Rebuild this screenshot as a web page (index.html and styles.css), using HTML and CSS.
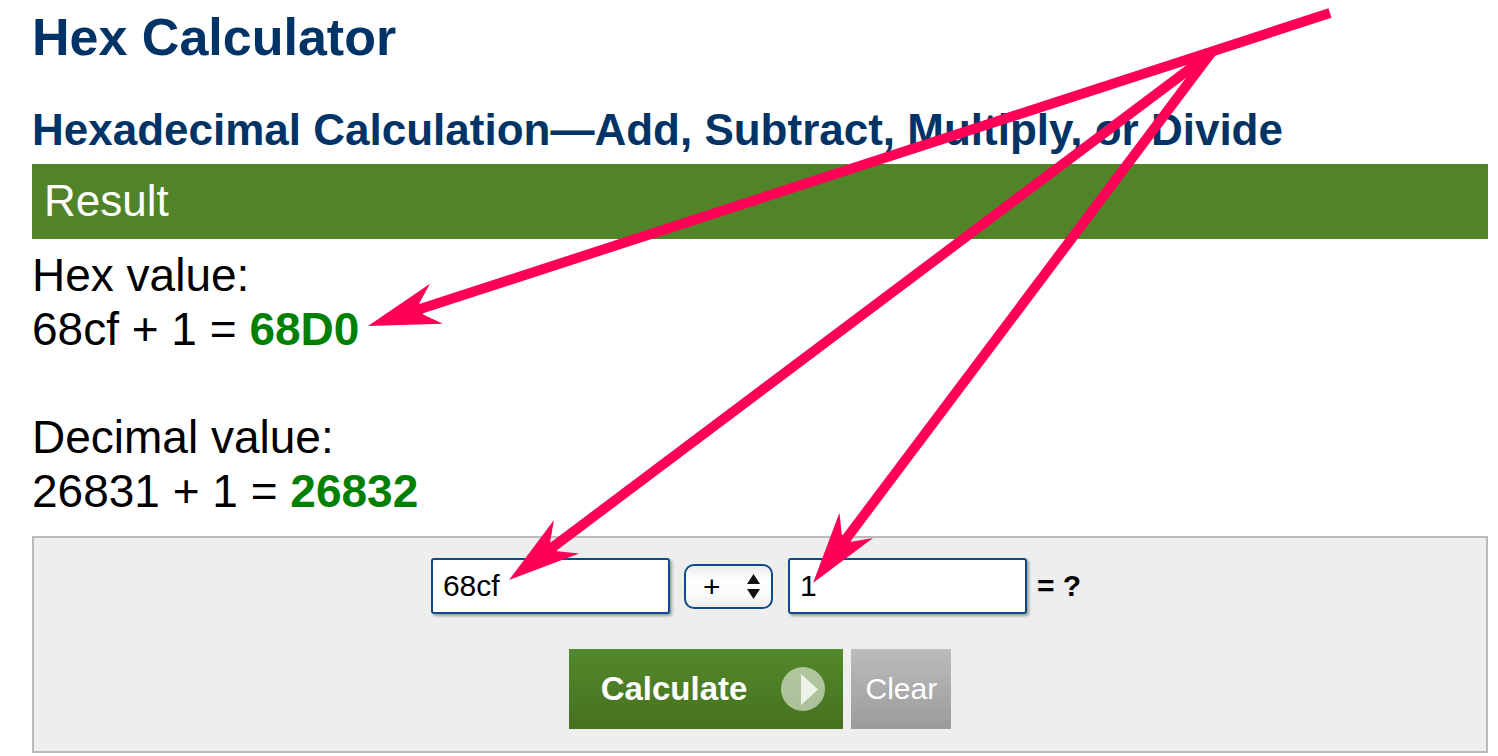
FILE: index.html
```html
<!DOCTYPE html>
<html lang="en">
<head>
    <meta charset="UTF-8">
    <meta name="viewport" content="width=device-width, initial-scale=1.0">
    <title>Hex Calculator</title>
    <link rel="stylesheet" href="styles.css">
</head>
<body>
    <div class="page">
        <h1>Hex Calculator</h1>
        <h2>Hexadecimal Calculation—Add, Subtract, Multiply, or Divide</h2>

        <div class="result-bar">Result</div>
        <div class="result-text">
            Hex value:<br>
            68cf + 1 = <b class="answer">68D0</b><br>
            <br>
            Decimal value:<br>
            26831 + 1 = <b class="answer">26832</b>
        </div>

        <div class="calc-box">
            <form class="calc-row">
                <input type="text" class="num-input" value="68cf">
                <div class="op-select">
                    <span class="op-value">+</span>
                    <svg class="op-arrows" width="13" height="25" viewBox="0 0 13 25">
                        <polygon points="6.5,0 13,10 0,10" fill="#111"/>
                        <polygon points="0,15 13,15 6.5,25" fill="#111"/>
                    </svg>
                </div>
                <input type="text" class="num-input" value="1">
                <span class="equals">= ?</span>
            </form>
            <div class="button-row">
                <button type="button" class="btn-calc">
                    Calculate
                    <span class="go-icon">
                        <svg width="44" height="44" viewBox="0 0 44 44">
                            <polygon points="20,7 37,22.5 20,38" fill="#eef3ea"/>
                        </svg>
                    </span>
                </button>
                <button type="button" class="btn-clear">Clear</button>
            </div>
        </div>
    </div>

    <!-- annotation arrows drawn on top of the page -->
    <svg class="arrows" width="1498" height="756" viewBox="0 0 1498 756">
        <g fill="#ff0057" stroke="#ff0057">
            <g transform="translate(368 326) rotate(-18.02)">
                <line x1="50" y1="0" x2="1011.6" y2="0" stroke-width="10"/>
                <polygon points="0,0 72,-21 56,-6 56,6 72,21" stroke="none"/>
            </g>
            <g transform="translate(509 580) rotate(-36.9)">
                <line x1="50" y1="0" x2="879" y2="0" stroke-width="10"/>
                <polygon points="0,0 72,-21 56,-6 56,6 72,21" stroke="none"/>
            </g>
            <g transform="translate(813 583) rotate(-53.1)">
                <line x1="50" y1="0" x2="664" y2="0" stroke-width="10"/>
                <polygon points="0,0 72,-21 56,-6 56,6 72,21" stroke="none"/>
            </g>
        </g>
    </svg>
</body>
</html>
```

FILE: styles.css
```css
* {
    margin: 0;
    padding: 0;
    box-sizing: border-box;
}

body {
    font-family: 'Liberation Sans', Arial, Helvetica, sans-serif;
    background: #fff;
    color: #000;
    position: relative;
    width: 1498px;
    height: 756px;
    overflow: hidden;
}

.page {
    width: 1456px;
    margin-left: 32px;
}

h1 {
    color: #003366;
    font-size: 52px;
    font-weight: 700;
    line-height: 58px;
    padding-top: 8px;
}

h2 {
    color: #003366;
    font-size: 44px;
    font-weight: 700;
    line-height: 50px;
    margin: 39px 0 9px;
}

.result-bar {
    background: #518428;
    color: #fff;
    font-size: 44px;
    line-height: 51px;
    padding: 11px 12px 13px;
}

.result-text {
    font-size: 46px;
    line-height: 54px;
    margin: 9px 0 18px;
}

.answer {
    color: #008000;
}

.calc-box {
    background: #eeeeee;
    border: 2px solid #bbbbbb;
    padding: 20px 0 22px;
    display: flex;
    flex-direction: column;
    align-items: center;
    gap: 35px;
}

.calc-row {
    display: flex;
    align-items: center;
    padding-right: 8px;
}

.num-input {
    width: 239px;
    height: 56px;
    border: 2px solid #0f4a8a;
    border-radius: 3px;
    box-shadow: 2px 2px 3px rgba(0, 0, 0, 0.35);
    background: #fff;
    font-family: inherit;
    font-size: 30px;
    color: #000;
    padding: 0 10px;
    outline: none;
}

.op-select {
    width: 89px;
    height: 45px;
    margin: 0 15px 0 14px;
    border: 2px solid #0b4a8c;
    border-radius: 10px;
    background: linear-gradient(#ececec 0%, #ffffff 35%, #fafafa 70%, #ededed 100%);
    display: flex;
    align-items: center;
    padding-left: 17px;
}

.op-value {
    font-size: 30px;
    line-height: 30px;
    width: 24px;
    margin-top: 2px;
}

.op-arrows {
    margin-left: 20px;
}

.equals {
    font-size: 30px;
    font-weight: 700;
    margin-left: 10px;
}

.button-row {
    display: flex;
    gap: 8px;
}

.btn-calc {
    height: 80px;
    display: flex;
    align-items: center;
    gap: 34px;
    padding: 0 18px 0 32px;
    border: none;
    background: linear-gradient(#53882b, #46711f);
    color: #fff;
    font-family: inherit;
    font-size: 33px;
    font-weight: 700;
}

.go-icon {
    width: 44px;
    height: 44px;
    border-radius: 50%;
    background: rgba(255, 255, 255, 0.55);
    display: block;
}

.go-icon svg {
    display: block;
}

.btn-clear {
    width: 100px;
    height: 80px;
    border: none;
    background: linear-gradient(#bcbcbc, #9b9b9b);
    color: #fff;
    font-family: inherit;
    font-size: 30px;
}

.arrows {
    position: absolute;
    top: 0;
    left: 0;
    pointer-events: none;
}
```
